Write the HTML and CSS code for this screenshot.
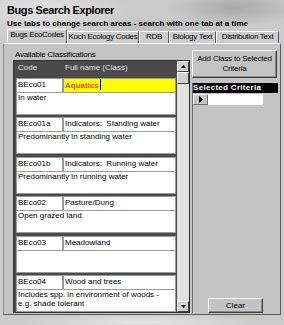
FILE: index.html
```html
<!DOCTYPE html>
<html lang="en">
<head>
  <meta charset="UTF-8">
  <title>Bugs Search Explorer</title>
  <link rel="stylesheet" href="styles.css">
</head>
<body>
  <div class="window">
    <div class="top">
      <h1>Bugs Search Explorer</h1>
      <p class="hint">Use tabs to change search areas - search with one tab at a time</p>
      <div class="tabs">
        <span class="tab active">Bugs EcoCodes</span>
        <span class="tab">Koch Ecology Codes</span>
        <span class="tab">RDB</span>
        <span class="tab">Biology Text</span>
        <span class="tab">Distribution Text</span>
      </div>
    </div>

    <div class="panel">
      <div class="classes">
        <div class="caption">Available Classifications</div>
        <div class="listbox">
          <div class="list">
            <div class="list-head">
              <span class="col-code">Code</span>
              <span>Full name (Class)</span>
            </div>
            <div class="records">
              <div class="record">
                <div class="code">BEco01</div>
                <div class="name current">Aquatics<i class="caret"></i></div>
                <div class="desc">In water</div>
              </div>
              <div class="record">
                <div class="code">BEco01a</div>
                <div class="name">Indicators:&nbsp; Standing water</div>
                <div class="desc">Predominantly in standing water</div>
              </div>
              <div class="record">
                <div class="code">BEco01b</div>
                <div class="name">Indicators:&nbsp; Running water</div>
                <div class="desc">Predominantly in running water</div>
              </div>
              <div class="record">
                <div class="code">BEco02</div>
                <div class="name">Pasture/Dung</div>
                <div class="desc">Open grazed land</div>
              </div>
              <div class="record">
                <div class="code">BEco03</div>
                <div class="name">Meadowland</div>
                <div class="desc"></div>
              </div>
              <div class="record">
                <div class="code">BEco04</div>
                <div class="name">Wood and trees</div>
                <div class="desc">Includes spp. in environment of woods -<br>e.g. shade tolerant</div>
              </div>
            </div>
          </div>
          <div class="scrollbar">
            <span class="sb-btn">
              <svg width="5" height="3" viewBox="0 0 5 3"><path d="M2.5 0L5 3H0z" fill="#000"/></svg>
            </span>
            <span class="sb-btn thumb"></span>
            <span class="sb-track"></span>
            <span class="sb-btn">
              <svg width="5" height="3" viewBox="0 0 5 3"><path d="M0 0H5L2.5 3z" fill="#000"/></svg>
            </span>
          </div>
        </div>
      </div>

      <div class="side">
        <button class="btn add">Add Class to Selected Criteria</button>
        <div class="criteria">
          <div class="criteria-head">Selected Criteria</div>
          <div class="criteria-row">
            <span class="selector">
              <svg width="4" height="7" viewBox="0 0 4 7"><path d="M0 0L4 3.5L0 7z" fill="#000"/></svg>
            </span>
            <span class="field"></span>
          </div>
          <button class="btn clear">Clear</button>
        </div>
      </div>
    </div>

    <div class="bottom"></div>
  </div>
</body>
</html>
```

FILE: styles.css
```css
* {
  box-sizing: border-box;
}
body {
  margin: 0;
  font-family: "Liberation Sans", Arial, sans-serif;
  font-size: 8px;
  color: #000;
}
.window {
  width: 284px;
  height: 325px;
  display: flex;
  flex-direction: column;
  background:
    radial-gradient(ellipse 90px 30px at 40px 10px, #e2e2e2, transparent),
    radial-gradient(ellipse 70px 18px at 235px 8px, #a8a8a8, transparent),
    radial-gradient(ellipse 80px 14px at 160px 30px, #bcbcbc, transparent),
    radial-gradient(ellipse 120px 8px at 140px 322px, #e6e6e6, transparent),
    #cbcbcb;
}

/* header + tabs */
.top {
  height: 43px;
  padding: 4px 0 0 7px;
}
h1 {
  margin: 0;
  font-size: 11px;
  line-height: 13px;
  letter-spacing: -0.4px;
}
.hint {
  margin: 2px 0 0;
  font-weight: bold;
  line-height: 10px;
}
.tabs {
  display: flex;
  align-items: flex-end;
  height: 14px;
}
.tab {
  height: 12px;
  line-height: 9px;
  padding: 0;
  border: 1px solid;
  border-color: #fff #5a5a5a transparent #fff;
  border-bottom: 0;
  background: #cdcdcd;
  letter-spacing: -0.3px;
  text-align: center;
  white-space: nowrap;
}
.tab:nth-child(1) { width: 60px; }
.tab:nth-child(2) { width: 72px; }
.tab:nth-child(3) { width: 30px; }
.tab:nth-child(4) { width: 47px; }
.tab:nth-child(5) { width: 63px; }
.tab.active {
  height: 14px;
  line-height: 10px;
  background: #c9c9c9;
}

/* tab page */
.panel {
  flex: 1;
  margin: 0 3px;
  display: flex;
  gap: 2px;
  padding: 6px 2px 1px 9px;
  border: 1px solid;
  border-color: #fff #5a5a5a #5a5a5a #8a8a8a;
  background: #c4c4c4;
}
.classes {
  width: 177px;
  display: flex;
  flex-direction: column;
}
.caption {
  line-height: 10px;
  padding-left: 2px;
  letter-spacing: -0.2px;
}
.listbox {
  flex: 1;
  display: flex;
  border: 1px solid #2e2e2e;
  min-height: 0;
}
.list {
  flex: 1;
  display: flex;
  flex-direction: column;
  background: #4a4a4a;
  overflow: hidden;
}
.list-head {
  flex: none;
  display: flex;
  height: 17px;
  line-height: 14px;
  padding-left: 4px;
  color: #e4e4e4;
}
.col-code {
  width: 47px;
}
.records {
  display: flex;
  flex-direction: column;
  gap: 2.4px;
  padding: 0 1px 0 2px;
}
.record {
  flex: none;
  display: grid;
  grid-template-columns: 47px 1fr;
  grid-template-rows: 15px 22px;
  background: #fff;
}
.code,
.name {
  border: 1px solid #9a9a9a;
  line-height: 12px;
  padding: 0 1px;
  white-space: nowrap;
  overflow: hidden;
}
.desc {
  grid-column: 1 / -1;
  border: 1px solid #9a9a9a;
  border-top: 0;
  line-height: 9px;
  padding: 0 1px;
}
.name.current {
  background: #ffff00;
  color: #f04a00;
  font-weight: bold;
}
.caret {
  display: inline-block;
  width: 1px;
  height: 11px;
  margin-left: 1px;
  vertical-align: -2px;
  background: #000;
}

/* scroll bar */
.scrollbar {
  width: 12px;
  display: flex;
  flex-direction: column;
  background: #e2e2e2;
}
.sb-btn {
  flex: none;
  height: 11px;
  display: flex;
  align-items: center;
  justify-content: center;
  background: #d0d0d0;
  border: 1px solid;
  border-color: #fff #404040 #404040 #fff;
}
.sb-btn.thumb {
  height: 12px;
}
.sb-track {
  flex: 1;
}

/* right column */
.side {
  width: 86px;
  display: flex;
  flex-direction: column;
}
.btn {
  font: inherit;
  color: #000;
  background: #c4c4c4;
  border: 1px solid;
  border-color: #fff #404040 #404040 #fff;
  box-shadow: inset -1px -1px #8a8a8a;
  padding: 0;
}
.add {
  width: 85px;
  height: 28px;
  line-height: 10px;
  margin-bottom: 5px;
  letter-spacing: -0.2px;
}
.criteria {
  flex: 1;
  display: flex;
  flex-direction: column;
  border-left: 1px solid #6a6a6a;
}
.criteria-head {
  background: #000;
  color: #fff;
  font-weight: bold;
  line-height: 10px;
  letter-spacing: 0.3px;
}
.criteria-row {
  display: flex;
  height: 11px;
  margin-top: 1px;
}
.selector {
  width: 15px;
  display: flex;
  align-items: center;
  justify-content: center;
  background: #c4c4c4;
  border: 1px solid;
  border-color: #fff #6a6a6a #6a6a6a #fff;
}
.field {
  width: 55px;
  background: #fff;
}
.clear {
  margin-top: auto;
  align-self: center;
  width: 55px;
  height: 15px;
}
.bottom {
  height: 10px;
}
```
